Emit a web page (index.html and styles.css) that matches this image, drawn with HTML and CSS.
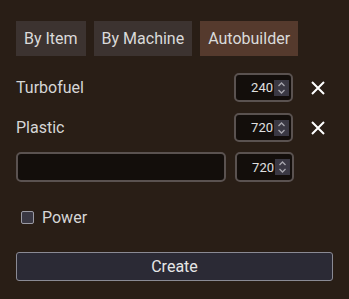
FILE: index.html
```html
<!DOCTYPE html>
<html>
<head>
<meta charset="utf-8">
<link rel="stylesheet" href="styles.css">
</head>
<body>
<div class="app">
  <div class="tabs">
    <div class="tab">By Item</div>
    <div class="tab">By Machine</div>
    <div class="tab active">Autobuilder</div>
  </div>
  <div class="rows">
    <div class="row">
      <div class="label">Turbofuel</div>
      <div class="num"><span class="val">240</span><span class="spin"><svg width="9" height="14" viewBox="0 0 9 14"><path d="M1.5 5 L4.5 2 L7.5 5 M1.5 9 L4.5 12 L7.5 9" fill="none" stroke="#a7a6ad" stroke-width="1.3"/></svg></span></div>
      <div class="close"><svg width="14" height="14" viewBox="0 0 14 14"><path d="M1 1 L13 13 M13 1 L1 13" stroke="#fff" stroke-width="2"/></svg></div>
    </div>
    <div class="row">
      <div class="label">Plastic</div>
      <div class="num"><span class="val">720</span><span class="spin"><svg width="9" height="14" viewBox="0 0 9 14"><path d="M1.5 5 L4.5 2 L7.5 5 M1.5 9 L4.5 12 L7.5 9" fill="none" stroke="#a7a6ad" stroke-width="1.3"/></svg></span></div>
      <div class="close"><svg width="14" height="14" viewBox="0 0 14 14"><path d="M1 1 L13 13 M13 1 L1 13" stroke="#fff" stroke-width="2"/></svg></div>
    </div>
    <div class="row row3">
      <div class="text"></div>
      <div class="num"><span class="val">720</span><span class="spin"><svg width="9" height="14" viewBox="0 0 9 14"><path d="M1.5 5 L4.5 2 L7.5 5 M1.5 9 L4.5 12 L7.5 9" fill="none" stroke="#a7a6ad" stroke-width="1.3"/></svg></span></div>
    </div>
  </div>
  <label class="check"><span class="box"></span><span>Power</span></label>
  <div class="create">Create</div>
</div>
</body>
</html>
```
FILE: styles.css
```css
html, body {
  margin: 0;
  background: #291e16;
}
body {
  font-family: Roboto, "Liberation Sans", sans-serif;
  font-size: 16px;
  color: #d6d6d6;
}
.app {
  padding: 21px 16px 0 16px;
}
.tabs {
  display: flex;
  gap: 8px;
}
.tab {
  height: 35px;
  line-height: 35px;
  padding: 0 8px;
  background: #3c3330;
  color: #dadada;
}
.tab.active {
  background: #553a2d;
}
.rows {
  margin-top: 17px;
  display: flex;
  flex-direction: column;
  gap: 11px;
}
.row {
  display: flex;
  align-items: center;
  height: 29px;
}
.row3 {
  height: 30px;
  margin-top: -1px;
}
.label {
  width: 218px;
}
.num {
  box-sizing: border-box;
  width: 59px;
  height: 29px;
  border: 2px solid #5a5250;
  border-radius: 5px;
  background: #130e0b;
  display: flex;
  align-items: center;
  justify-content: flex-end;
  padding-right: 2px;
  font-size: 13px;
  color: #e0e0e0;
}
.row3 .num {
  height: 30px;
}
.val {
  margin-right: 1px;
}
.spin {
  width: 15px;
  height: 16px;
  background: #3a3843;
  display: flex;
  align-items: center;
  justify-content: center;
}
.close {
  margin-left: 18px;
  display: flex;
}
.text {
  box-sizing: border-box;
  width: 210px;
  height: 30px;
  margin-right: 9px;
  border: 2px solid #5a5250;
  border-radius: 5px;
  background: #130e0b;
}
.check {
  display: flex;
  align-items: center;
  gap: 8px;
  margin-top: 25px;
  margin-left: 5px;
  height: 20px;
}
.box {
  box-sizing: border-box;
  width: 13px;
  height: 13px;
  border: 1px solid #9b9aa3;
  border-radius: 2px;
  background: #3a3843;
}
.create {
  margin-top: 25px;
  box-sizing: border-box;
  height: 29px;
  line-height: 27px;
  text-align: center;
  border: 1px solid #8a8a94;
  border-radius: 3px;
  background: #2b2a35;
  color: #e6e6e6;
}
```
